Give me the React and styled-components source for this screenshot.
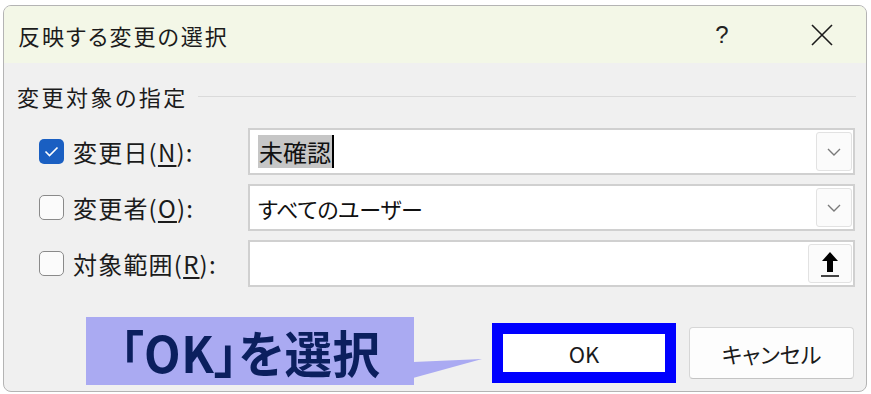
import React from "react";
import styled, { createGlobalStyle } from "styled-components";

const Global = createGlobalStyle`
  html, body { margin: 0; padding: 0; background: #ffffff; }
  body { font-family: "Noto Sans CJK JP", "Noto Sans", sans-serif; color: #1b1b1b; }
  * { box-sizing: border-box; }
`;

const Dialog = styled.div`
  position: relative;
  margin: 5px 0 0 3px;
  width: 864px;
  height: 387px;
  border: 1px solid #b4b4b4;
  border-radius: 8px;
  overflow: hidden;
  background: #f0f0f0;
  display: flex;
  flex-direction: column;
  font-feature-settings: "palt";
`;

const TitleBar = styled.div`
  height: 57px;
  flex: none;
  background: #f3f7e7;
  display: flex;
  align-items: center;
  padding-left: 14px;
`;

const Title = styled.div`
  flex: 1;
  font-size: 22px;
  letter-spacing: 2px;
`;

const TitleButton = styled.div`
  width: ${(p) => p.$w}px;
  height: 57px;
  display: flex;
  align-items: center;
  justify-content: center;
  font-size: 24px;
  font-weight: 300;
  font-family: "Liberation Sans", sans-serif;
  color: #222;
`;

const Content = styled.div`
  flex: 1;
  padding: 0 10px 0 13px;
  display: flex;
  flex-direction: column;
`;

const GroupHeader = styled.div`
  display: flex;
  align-items: center;
  height: 38px;
  margin-top: 14px;
`;

const GroupLabel = styled.div`
  font-size: 22px;
  letter-spacing: 2.5px;
`;

const GroupLine = styled.div`
  flex: 1;
  height: 1px;
  background: #dadada;
  margin-left: 10px;
`;

const Rows = styled.div`
  display: flex;
  flex-direction: column;
  gap: 9px;
  margin-top: 13px;
`;

const Row = styled.div`
  display: flex;
  align-items: center;
  height: 47px;
  padding-left: 22px;
`;

const Check = styled.div`
  width: 25px;
  height: 25px;
  border-radius: 5px;
  flex: none;
  display: flex;
  align-items: center;
  justify-content: center;
  background: ${(p) => (p.$on ? "#1a5fc2" : "#fbfbfb")};
  border: ${(p) => (p.$on ? "none" : "1.5px solid #8a8a8a")};
`;

const Label = styled.div`
  width: 175px;
  flex: none;
  margin-left: 9px;
  font-size: 24px;
  letter-spacing: 1.2px;
  color: #1b1b1b;
`;

const Under = styled.span`
  text-decoration: underline;
  text-underline-offset: 3px;
  text-decoration-thickness: 1.5px;
`;

const Field = styled.div`
  width: 607px;
  height: 100%;
  background: #ffffff;
  border: 2px solid #d0d0d0;
  display: flex;
  align-items: center;
  padding-left: 8px;
`;

const FieldText = styled.div`
  flex: 1;
  font-size: 22px;
  letter-spacing: -0.3px;
  color: #111;
  display: flex;
  align-items: center;
`;

const Selected = styled.span`
  background: #c6c6c6;
  padding: 0 1px;
  line-height: 33px;
  border-right: 2px solid #000;
  font-size: 24px;
  letter-spacing: 0;
`;

const SideButton = styled.div`
  width: ${(p) => p.$w}px;
  height: calc(100% - 4px);
  margin-right: 1px;
  background: #fbfbfb;
  border: 1px solid #e2e2e2;
  border-radius: 3px;
  display: flex;
  align-items: center;
  justify-content: center;
`;

const ButtonRow = styled.div`
  display: flex;
  align-items: center;
  justify-content: flex-end;
  gap: 13px;
  margin-top: 36px;
  padding-right: 2px;
`;

const OkButton = styled.div`
  width: 184px;
  height: 60px;
  border: 11px solid #0000ff;
  background: #ffffff;
  display: flex;
  align-items: center;
  justify-content: center;
  font-size: 22px;
  color: #1b1b1b;
`;

const CancelButton = styled.div`
  width: 165px;
  height: 52px;
  background: #fdfdfd;
  border: 1px solid #d6d6d6;
  border-bottom-color: #c4c4c4;
  border-radius: 4px;
  display: flex;
  align-items: center;
  justify-content: center;
  font-size: 22px;
  color: #1b1b1b;
`;

const Callout = styled.div`
  position: absolute;
  left: 82px;
  top: 311px;
  width: 328px;
  height: 68px;
  background: #aaaaf2;
  display: flex;
  align-items: center;
  justify-content: center;
  font-size: 50px;
  font-weight: 700;
  color: #0b1f5e;
  letter-spacing: 0.5px;
`;

const CalloutText = styled.span`
  display: inline-block;
  transform: scaleX(0.95);
  line-height: 1;
`;

const Tail = styled.svg`
  position: absolute;
  left: 409px;
  top: 346px;
  overflow: visible;
`;

const Chevron = () => (
  <svg width="14" height="8" viewBox="0 0 14 8">
    <path d="M1 1 L7 7 L13 1" fill="none" stroke="#7a7a7a" strokeWidth="1.4" />
  </svg>
);

const RangeIcon = () => (
  <svg width="22" height="28" viewBox="0 0 22 28">
    <path d="M11 2 L3 11 H8 V22 H14 V11 H19 Z" fill="#000" />
    <rect x="2" y="25" width="18" height="2" fill="#444" />
  </svg>
);

const CheckMark = () => (
  <svg width="15" height="11" viewBox="0 0 15 11">
    <path d="M1.5 5.5 L5.5 9.5 L13.5 1.5" fill="none" stroke="#ffffff" strokeWidth="1.6" />
  </svg>
);

const CloseIcon = () => (
  <svg width="22" height="22" viewBox="0 0 22 22">
    <path d="M1 1 L21 21 M21 1 L1 21" stroke="#1b1b1b" strokeWidth="1.6" />
  </svg>
);

export default function App() {
  return (
    <>
      <Global />
      <Dialog>
        <TitleBar>
          <Title>反映する変更の選択</Title>
          <TitleButton $w={40}>?</TitleButton>
          <TitleButton $w={44} style={{ marginLeft: 58, marginRight: 22 }}>
            <CloseIcon />
          </TitleButton>
        </TitleBar>
        <Content>
          <GroupHeader>
            <GroupLabel>変更対象の指定</GroupLabel>
            <GroupLine />
          </GroupHeader>
          <Rows>
            <Row>
              <Check $on>
                <CheckMark />
              </Check>
              <Label>
                変更日(<Under>N</Under>):
              </Label>
              <Field>
                <FieldText>
                  <Selected>未確認</Selected>
                </FieldText>
                <SideButton $w={36}>
                  <Chevron />
                </SideButton>
              </Field>
            </Row>
            <Row>
              <Check />
              <Label>
                変更者(<Under>O</Under>):
              </Label>
              <Field>
                <FieldText>すべてのユーザー</FieldText>
                <SideButton $w={36}>
                  <Chevron />
                </SideButton>
              </Field>
            </Row>
            <Row>
              <Check />
              <Label>
                対象範囲(<Under>R</Under>):
              </Label>
              <Field>
                <FieldText />
                <SideButton $w={44}>
                  <RangeIcon />
                </SideButton>
              </Field>
            </Row>
          </Rows>
          <ButtonRow>
            <OkButton>OK</OkButton>
            <CancelButton>キャンセル</CancelButton>
          </ButtonRow>
        </Content>
        <Callout>
          <CalloutText>「OK」を選択</CalloutText>
        </Callout>
        <Tail width="70" height="30">
          <polygon points="0,10 69,7 0,26" fill="#aaaaf2" />
        </Tail>
      </Dialog>
    </>
  );
}
